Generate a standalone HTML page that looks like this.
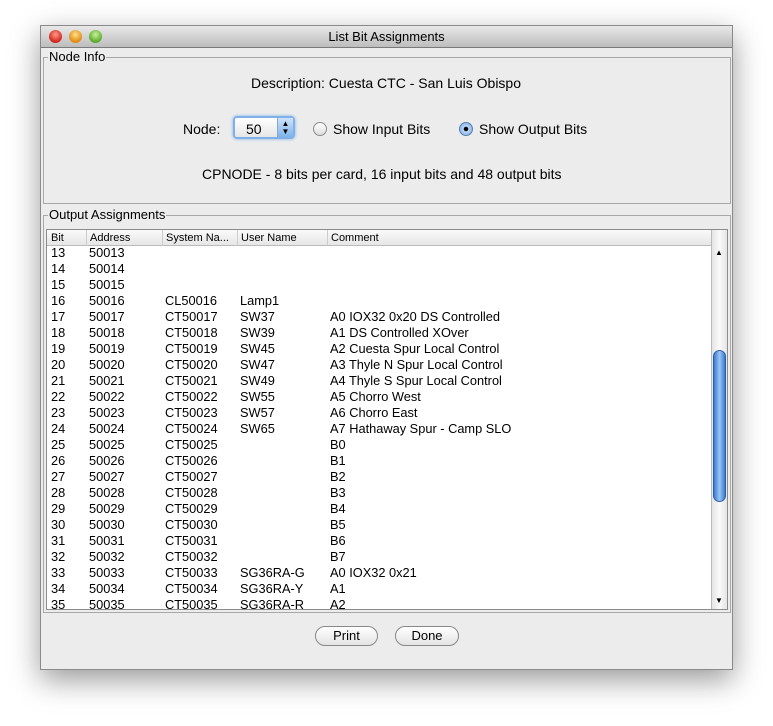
<!DOCTYPE html>
<html><head><meta charset="utf-8"><style>
*{margin:0;padding:0;box-sizing:border-box}
body{width:773px;height:726px;background:#fff;position:relative;font-family:"Liberation Sans",sans-serif;font-size:14px;color:#000;overflow:hidden}
.a{position:absolute}
#win{left:40px;top:25px;width:693px;height:645px;background:#ececec;border:1px solid #8a8a8a;box-shadow:0 10px 28px rgba(0,0,0,.4)}
#title{left:0;top:0;width:691px;height:22px;background:linear-gradient(#e8e8e8,#bdbdbd);border-bottom:1px solid #7a7a7a;text-align:center;line-height:22px;font-size:13px}
.dot{top:4px;width:13px;height:13px;border-radius:50%}
.grp{border:1px solid #a8a8a8}
.lg{background:#ececec;padding:0 1px;line-height:14px;font-size:13px}
.rb{width:14px;height:14px;border-radius:50%;border:1px solid #8a8a8a;background:linear-gradient(#fff,#ddd)}
.row{position:absolute;left:0;height:16px;line-height:16px;width:664px;font-size:12.8px}
.row span{position:absolute}
.btn{height:20px;border:1px solid #888;border-radius:10px;background:linear-gradient(#fff,#e4e4e4);text-align:center;line-height:18px;font-size:13px}
</style></head><body>
<div class="a" id="win">
 <div class="a" id="title">List Bit Assignments</div>
 <div class="a dot" style="left:8px;background:radial-gradient(circle at 50% 35%,#ff9a8a,#d2231a 70%)"></div>
 <div class="a dot" style="left:28px;background:radial-gradient(circle at 50% 35%,#ffe08a,#e08a10 70%)"></div>
 <div class="a dot" style="left:48px;background:radial-gradient(circle at 50% 35%,#c8f29a,#5aa82a 70%)"></div>

 <div class="a grp" style="left:2px;top:31px;width:688px;height:147px"></div>
 <div class="a lg" style="left:7px;top:24px">Node Info</div>
 <div class="a" style="left:210px;top:49px">Description: Cuesta CTC - San Luis Obispo</div>
 <div class="a" style="left:142px;top:95px">Node:</div>
 <div class="a" style="left:192px;top:90px;width:62px;height:23px;border:2px solid #7fb0e8;border-radius:4px;background:linear-gradient(#fff,#e6e6e6);box-shadow:0 0 3px #7fb0e8"></div>
 <div class="a" style="left:205px;top:95px">50</div>
 <div class="a" style="left:236px;top:92px;width:16px;height:19px;background:linear-gradient(#cfe3fb,#7fb2ea);border-left:1px solid #8ab;font-size:8px;line-height:8px;text-align:center;padding-top:2px">▲<br>▼</div>
 <div class="a rb" style="left:272px;top:96px"></div>
 <div class="a" style="left:292px;top:95px">Show Input Bits</div>
 <div class="a rb" style="left:418px;top:96px;background:radial-gradient(circle,#000 2px,#bcd8f8 2.5px,#6fa3e0);border-color:#5a7fb0"></div>
 <div class="a" style="left:438px;top:95px">Show Output Bits</div>
 <div class="a" style="left:161px;top:140px">CPNODE - 8 bits per card, 16 input bits and 48 output bits</div>

 <div class="a grp" style="left:2px;top:189px;width:688px;height:398px"></div>
 <div class="a lg" style="left:7px;top:182px">Output Assignments</div>
 <div class="a" style="left:5px;top:203px;width:682px;height:381px;background:#fff;border:1px solid #8c8c8c;overflow:hidden">
  <div class="a" style="left:0;top:0;width:664px;height:16px;background:linear-gradient(#fafafa,#e6e6e6);border-bottom:1px solid #bbb;font-size:11px;line-height:16px">
   <span class="a" style="left:4px">Bit</span>
   <span class="a" style="left:39px;border-left:1px solid #ccc;padding-left:3px">Address</span>
   <span class="a" style="left:115px;border-left:1px solid #ccc;padding-left:3px">System Na...</span>
   <span class="a" style="left:190px;border-left:1px solid #ccc;padding-left:3px">User Name</span>
   <span class="a" style="left:280px;border-left:1px solid #ccc;padding-left:3px">Comment</span>
  </div>
  <div class="a" style="left:664px;top:0;width:16px;height:381px;background:linear-gradient(90deg,#e4e4e4,#fafafa,#e4e4e4);border-left:1px solid #bbb">
   <div class="a" style="left:3px;top:18px;font-size:8px">▲</div>
   <div class="a" style="left:1px;top:120px;width:13px;height:152px;border-radius:7px;background:linear-gradient(90deg,#3a7ad0,#9cc6f4,#3a7ad0);border:1px solid #2a5ea8"></div>
   <div class="a" style="left:3px;top:366px;font-size:8px">▼</div>
  </div>
  <div class="a" style="left:0;top:15px;width:664px;height:365px">
<div class="row" style="top:0"><span style="left:4px">13</span><span style="left:42px">50013</span></div>
<div class="row" style="top:16px"><span style="left:4px">14</span><span style="left:42px">50014</span></div>
<div class="row" style="top:32px"><span style="left:4px">15</span><span style="left:42px">50015</span></div>
<div class="row" style="top:48px"><span style="left:4px">16</span><span style="left:42px">50016</span><span style="left:118px">CL50016</span><span style="left:193px">Lamp1</span></div>
<div class="row" style="top:64px"><span style="left:4px">17</span><span style="left:42px">50017</span><span style="left:118px">CT50017</span><span style="left:193px">SW37</span><span style="left:283px">A0 IOX32 0x20 DS Controlled</span></div>
<div class="row" style="top:80px"><span style="left:4px">18</span><span style="left:42px">50018</span><span style="left:118px">CT50018</span><span style="left:193px">SW39</span><span style="left:283px">A1 DS Controlled XOver</span></div>
<div class="row" style="top:96px"><span style="left:4px">19</span><span style="left:42px">50019</span><span style="left:118px">CT50019</span><span style="left:193px">SW45</span><span style="left:283px">A2 Cuesta Spur Local Control</span></div>
<div class="row" style="top:112px"><span style="left:4px">20</span><span style="left:42px">50020</span><span style="left:118px">CT50020</span><span style="left:193px">SW47</span><span style="left:283px">A3 Thyle N Spur Local Control</span></div>
<div class="row" style="top:128px"><span style="left:4px">21</span><span style="left:42px">50021</span><span style="left:118px">CT50021</span><span style="left:193px">SW49</span><span style="left:283px">A4 Thyle S Spur Local Control</span></div>
<div class="row" style="top:144px"><span style="left:4px">22</span><span style="left:42px">50022</span><span style="left:118px">CT50022</span><span style="left:193px">SW55</span><span style="left:283px">A5 Chorro West</span></div>
<div class="row" style="top:160px"><span style="left:4px">23</span><span style="left:42px">50023</span><span style="left:118px">CT50023</span><span style="left:193px">SW57</span><span style="left:283px">A6 Chorro East</span></div>
<div class="row" style="top:176px"><span style="left:4px">24</span><span style="left:42px">50024</span><span style="left:118px">CT50024</span><span style="left:193px">SW65</span><span style="left:283px">A7 Hathaway Spur - Camp SLO</span></div>
<div class="row" style="top:192px"><span style="left:4px">25</span><span style="left:42px">50025</span><span style="left:118px">CT50025</span><span style="left:283px">B0</span></div>
<div class="row" style="top:208px"><span style="left:4px">26</span><span style="left:42px">50026</span><span style="left:118px">CT50026</span><span style="left:283px">B1</span></div>
<div class="row" style="top:224px"><span style="left:4px">27</span><span style="left:42px">50027</span><span style="left:118px">CT50027</span><span style="left:283px">B2</span></div>
<div class="row" style="top:240px"><span style="left:4px">28</span><span style="left:42px">50028</span><span style="left:118px">CT50028</span><span style="left:283px">B3</span></div>
<div class="row" style="top:256px"><span style="left:4px">29</span><span style="left:42px">50029</span><span style="left:118px">CT50029</span><span style="left:283px">B4</span></div>
<div class="row" style="top:272px"><span style="left:4px">30</span><span style="left:42px">50030</span><span style="left:118px">CT50030</span><span style="left:283px">B5</span></div>
<div class="row" style="top:288px"><span style="left:4px">31</span><span style="left:42px">50031</span><span style="left:118px">CT50031</span><span style="left:283px">B6</span></div>
<div class="row" style="top:304px"><span style="left:4px">32</span><span style="left:42px">50032</span><span style="left:118px">CT50032</span><span style="left:283px">B7</span></div>
<div class="row" style="top:320px"><span style="left:4px">33</span><span style="left:42px">50033</span><span style="left:118px">CT50033</span><span style="left:193px">SG36RA-G</span><span style="left:283px">A0 IOX32 0x21</span></div>
<div class="row" style="top:336px"><span style="left:4px">34</span><span style="left:42px">50034</span><span style="left:118px">CT50034</span><span style="left:193px">SG36RA-Y</span><span style="left:283px">A1</span></div>
<div class="row" style="top:352px"><span style="left:4px">35</span><span style="left:42px">50035</span><span style="left:118px">CT50035</span><span style="left:193px">SG36RA-R</span><span style="left:283px">A2</span></div>
  </div>
 </div>
 <div class="a btn" style="left:274px;top:600px;width:63px">Print</div>
 <div class="a btn" style="left:354px;top:600px;width:64px">Done</div>
</div>
</body></html>
